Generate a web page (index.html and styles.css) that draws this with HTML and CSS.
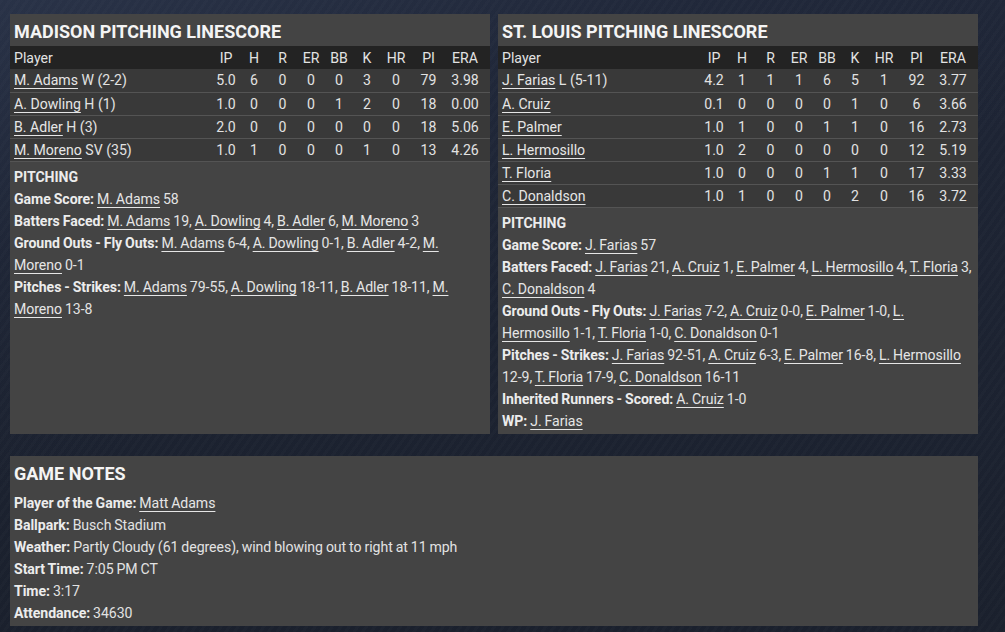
FILE: index.html
```html
<!DOCTYPE html>
<html>
<head>
<meta charset="utf-8">
<link rel="stylesheet" href="styles.css">
</head>
<body>
<div class="page">
  <div class="top-grid">
    <section class="panel">
      <h2 class="panel-title">MADISON PITCHING LINESCORE</h2>
      <table class="line">
        <thead>
          <tr><th class="pl">Player</th><th class="c-ip">IP</th><th class="c-h">H</th><th class="c-r">R</th><th class="c-er">ER</th><th class="c-bb">BB</th><th class="c-k">K</th><th class="c-hr">HR</th><th class="c-pi">PI</th><th class="c-era">ERA</th></tr>
        </thead>
        <tbody>
          <tr><td class="pl"><a>M. Adams</a> W (2-2)</td><td>5.0</td><td>6</td><td>0</td><td>0</td><td>0</td><td>3</td><td>0</td><td>79</td><td>3.98</td></tr>
          <tr><td class="pl"><a>A. Dowling</a> H (1)</td><td>1.0</td><td>0</td><td>0</td><td>0</td><td>1</td><td>2</td><td>0</td><td>18</td><td>0.00</td></tr>
          <tr><td class="pl"><a>B. Adler</a> H (3)</td><td>2.0</td><td>0</td><td>0</td><td>0</td><td>0</td><td>0</td><td>0</td><td>18</td><td>5.06</td></tr>
          <tr><td class="pl"><a>M. Moreno</a> SV (35)</td><td>1.0</td><td>1</td><td>0</td><td>0</td><td>0</td><td>1</td><td>0</td><td>13</td><td>4.26</td></tr>
        </tbody>
      </table>
      <div class="notes">
        <p><b>PITCHING</b></p>
        <p><b>Game Score:</b> <a>M. Adams</a> 58</p>
        <p><b>Batters Faced:</b> <a>M. Adams</a> 19, <a>A. Dowling</a> 4, <a>B. Adler</a> 6, <a>M. Moreno</a> 3</p>
        <p><b>Ground Outs - Fly Outs:</b> <a>M. Adams</a> 6-4, <a>A. Dowling</a> 0-1, <a>B. Adler</a> 4-2, <a>M.</a> <a>Moreno</a> 0-1</p>
        <p><b>Pitches - Strikes:</b> <a>M. Adams</a> 79-55, <a>A. Dowling</a> 18-11, <a>B. Adler</a> 18-11, <a>M.</a> <a>Moreno</a> 13-8</p>
      </div>
    </section>
    <section class="panel">
      <h2 class="panel-title">ST. LOUIS PITCHING LINESCORE</h2>
      <table class="line">
        <thead>
          <tr><th class="pl">Player</th><th class="c-ip">IP</th><th class="c-h">H</th><th class="c-r">R</th><th class="c-er">ER</th><th class="c-bb">BB</th><th class="c-k">K</th><th class="c-hr">HR</th><th class="c-pi">PI</th><th class="c-era">ERA</th></tr>
        </thead>
        <tbody>
          <tr><td class="pl"><a>J. Farias</a> L (5-11)</td><td>4.2</td><td>1</td><td>1</td><td>1</td><td>6</td><td>5</td><td>1</td><td>92</td><td>3.77</td></tr>
          <tr><td class="pl"><a>A. Cruiz</a></td><td>0.1</td><td>0</td><td>0</td><td>0</td><td>0</td><td>1</td><td>0</td><td>6</td><td>3.66</td></tr>
          <tr><td class="pl"><a>E. Palmer</a></td><td>1.0</td><td>1</td><td>0</td><td>0</td><td>1</td><td>1</td><td>0</td><td>16</td><td>2.73</td></tr>
          <tr><td class="pl"><a>L. Hermosillo</a></td><td>1.0</td><td>2</td><td>0</td><td>0</td><td>0</td><td>0</td><td>0</td><td>12</td><td>5.19</td></tr>
          <tr><td class="pl"><a>T. Floria</a></td><td>1.0</td><td>0</td><td>0</td><td>0</td><td>1</td><td>1</td><td>0</td><td>17</td><td>3.33</td></tr>
          <tr><td class="pl"><a>C. Donaldson</a></td><td>1.0</td><td>1</td><td>0</td><td>0</td><td>0</td><td>2</td><td>0</td><td>16</td><td>3.72</td></tr>
        </tbody>
      </table>
      <div class="notes">
        <p><b>PITCHING</b></p>
        <p><b>Game Score:</b> <a>J. Farias</a> 57</p>
        <p><b>Batters Faced:</b> <a>J. Farias</a> 21, <a>A. Cruiz</a> 1, <a>E. Palmer</a> 4, <a>L. Hermosillo</a> 4, <a>T. Floria</a> 3, <a>C. Donaldson</a> 4</p>
        <p><b>Ground Outs - Fly Outs:</b> <a>J. Farias</a> 7-2, <a>A. Cruiz</a> 0-0, <a>E. Palmer</a> 1-0, <a>L.</a> <a>Hermosillo</a> 1-1, <a>T. Floria</a> 1-0, <a>C. Donaldson</a> 0-1</p>
        <p><b>Pitches - Strikes:</b> <a>J. Farias</a> 92-51, <a>A. Cruiz</a> 6-3, <a>E. Palmer</a> 16-8, <a>L. Hermosillo</a> 12-9, <a>T. Floria</a> 17-9, <a>C. Donaldson</a> 16-11</p>
        <p><b>Inherited Runners - Scored:</b> <a>A. Cruiz</a> 1-0</p>
        <p><b>WP:</b> <a>J. Farias</a></p>
      </div>
    </section>
  </div>
  <section class="panel game-notes">
    <h2 class="panel-title">GAME NOTES</h2>
    <div class="notes">
      <p><b>Player of the Game:</b> <a>Matt Adams</a></p>
      <p><b>Ballpark:</b> Busch Stadium</p>
      <p><b>Weather:</b> Partly Cloudy (61 degrees), wind blowing out to right at 11 mph</p>
      <p><b>Start Time:</b> 7:05 PM CT</p>
      <p><b>Time:</b> 3:17</p>
      <p><b>Attendance:</b> 34630</p>
    </div>
  </section>
</div>
</body>
</html>
```

FILE: styles.css
```css
html, body {
  margin: 0;
  padding: 0;
  height: 100%;
}
body {
  background-color: #1d2331;
  background-image:
    linear-gradient(160deg, rgba(90,110,150,0.18) 0%, rgba(60,75,110,0.08) 25%, rgba(0,0,0,0) 50%),
    repeating-linear-gradient(125deg, rgba(255,255,255,0.012) 0 3px, rgba(0,0,0,0.02) 3px 7px),
    linear-gradient(180deg, #1f2637 0%, #1b212e 100%);
  font-family: Roboto, "Open Sans", "DejaVu Sans", sans-serif;
  font-size: 14.1px;
  color: #e2e2e2;
  overflow: hidden;
}
.page {
  padding: 14px 27px 0 10px;
  width: 968px;
}
.top-grid {
  display: grid;
  grid-template-columns: 480px 480px;
  gap: 8px;
}
.panel {
  background: #444444;
  display: flex;
  flex-direction: column;
}
.panel-title {
  margin: 0;
  height: 32px;
  line-height: 35px;
  padding: 0 4px;
  font-size: 18px;
  font-weight: 700;
  color: #f4f4f4;
}
.line {
  border-collapse: collapse;
  width: 480px;
  table-layout: fixed;
}
.line th, .line td {
  padding: 0;
  text-align: center;
  font-weight: 400;
  white-space: nowrap;
}
.line thead tr {
  background: #232323;
  height: 23px;
}
.line tbody tr {
  background: #393939;
  height: 23px;
  border-bottom: 1px solid #545454;
}
.line tbody td {
  height: 22px;
}
.line .pl {
  text-align: left;
  padding-left: 4px;
}
.line th:first-child { width: 198px; }
.c-ip { width: 28px; }
.c-h { width: 28px; }
.c-r { width: 29px; }
.c-er { width: 28px; }
.c-bb { width: 28px; }
.c-k { width: 28px; }
.c-hr { width: 30px; }
.c-pi { width: 35px; }
.line th.c-era { width: 38px; padding-right: 6px; }
.line tr td:last-child { padding-right: 6px; }
a {
  color: #e6e6e6;
  text-decoration: underline;
  text-underline-offset: 3px;
  text-decoration-thickness: 1px;
}
.notes {
  padding: 4px 5px 2px 4px;
  letter-spacing: -0.05px;
  word-spacing: -0.5px;
}
.notes p {
  margin: 0;
  line-height: 22px;
}
.notes b {
  font-weight: 700;
  color: #ececec;
}
.game-notes {
  margin-top: 22px;
  height: 170px;
}
```
